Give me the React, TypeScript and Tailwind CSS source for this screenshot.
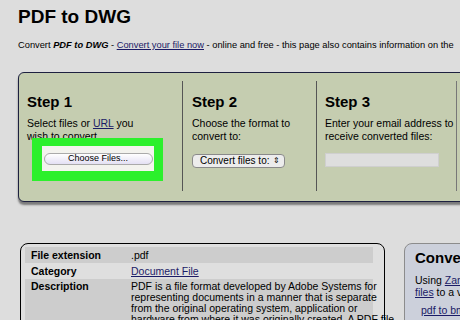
import React from 'react';

const rows = [
  { label: 'File extension', value: '.pdf', dark: true },
  { label: 'Category', value: 'Document File', link: true },
];

export default function App() {
  return (
    <div className="w-[460px] h-[320px] overflow-hidden bg-[#dddddd] text-black font-['Liberation_Sans',Arial,sans-serif]">
      {/* heading */}
      <div className="pl-[18px] pt-[6px]">
        <h1 className="text-[19px] leading-[22px] font-bold">PDF to DWG</h1>
        <p className="mt-[11px] text-[9.3px] leading-[12px] whitespace-nowrap">
          Convert <i className="font-bold">PDF to DWG</i> - <span className="underline text-[#1b1b66]">Convert your file now</span> - online and free - this page also contains information on the
        </p>
      </div>

      {/* step box */}
      <div className="ml-[18px] mt-[21px] w-[480px] h-[130px] flex pt-[8px] pb-[10px] rounded-[6px] border border-[#1d2040] bg-[#c5cdb0] shadow-[0_3px_2px_rgba(40,40,40,0.55)]">
        <div className="w-[164px] shrink-0 border-r border-[#555] pl-[8px] pt-[12px]">
          <h2 className="text-[15px] leading-[18px] font-bold">Step 1</h2>
          <p className="mt-[6px] text-[10.5px] leading-[13px]">
            Select files or <span className="underline text-[#1b1b66]">URL</span> you<br />wish to convert ...
          </p>
          <div className="relative -mt-[5px] ml-[5px] w-[131px] h-[43px] bg-[#2cf02c] pt-[8px] pl-[10px]">
            <div className="w-[112px] h-[25px] bg-[#f3f3ee] flex items-center justify-center">
              <div className="w-[109px] h-[12px] rounded-full border border-[#aaa] bg-gradient-to-b from-[#ffffff] to-[#e4e0f4] flex items-center justify-center text-[9px] leading-none">
                Choose Files...
              </div>
            </div>
          </div>
        </div>
        <div className="w-[134px] shrink-0 border-r border-[#555] pl-[9px] pt-[12px]">
          <h2 className="text-[15px] leading-[18px] font-bold">Step 2</h2>
          <p className="mt-[6px] text-[10.5px] leading-[13px]">
            Choose the format to<br />convert to:
          </p>
          <div className="mt-[11px] w-[93px] h-[14px] rounded-[4px] border border-[#8a8a8a] bg-[#ececec] flex items-center justify-between pl-[7px] pr-[4px] text-[10px] leading-none">
            <span>Convert files to:</span>
            <span className="text-[8px]">⇕</span>
          </div>
        </div>
        <div className="w-[140px] shrink-0 border-r border-[#777] pl-[8px] pt-[12px]">
          <h2 className="text-[15px] leading-[18px] font-bold">Step 3</h2>
          <p className="mt-[6px] text-[10.5px] leading-[13px] whitespace-nowrap">
            Enter your email address to<br />receive converted files:
          </p>
          <div className="mt-[10px] w-[114px] h-[14px] border border-[#cfcfcf] bg-[#dedede]" />
        </div>
      </div>

      {/* info tables */}
      <div className="mt-[41px] flex">
        <div className="ml-[20px] w-[365px] h-[100px] shrink-0 rounded-[8px] border-[1.5px] border-black bg-[#dfdfdf] pt-[3px] pl-[4px] pr-[11px]">
          {rows.map((r) => (
            <div key={r.label} className={`flex h-[16px] items-center text-[10.5px] leading-[13px] ${r.dark ? 'bg-[#cdcdcd]' : ''}`}>
              <div className="w-[106px] shrink-0 pl-[6px] font-bold">{r.label}</div>
              <div className={r.link ? 'underline text-[#1b1b66]' : ''}>{r.value}</div>
            </div>
          ))}
          <div className="flex bg-[#cdcdcd] pt-[2px] text-[10.5px] leading-[11px]">
            <div className="w-[106px] shrink-0 pl-[6px] font-bold">Description</div>
            <div className="whitespace-nowrap">
              PDF is a file format developed by Adobe Systems for<br />
              representing documents in a manner that is separate<br />
              from the original operating system, application or<br />
              hardware from where it was originally created. A PDF file
            </div>
          </div>
        </div>
        <div className="ml-[19px] w-[90px] h-[100px] shrink-0 rounded-[8px] border border-[#8c8c8c] bg-[#ccd0db] pl-[10px] pt-[5px] whitespace-nowrap">
          <h3 className="text-[15px] leading-[18px] font-bold">Convert PDF files</h3>
          <p className="mt-[7px] text-[10.5px] leading-[12px]">
            Using <span className="underline text-[#1b1b66]">Zamzar convert PDF</span><br />
            <span className="underline text-[#1b1b66]">files</span> to a variety of formats
          </p>
          <p className="mt-[6px] pl-[6px] text-[10.5px] leading-[12px] underline text-[#1b1b66]">pdf to bmp</p>
        </div>
      </div>
    </div>
  );
}
